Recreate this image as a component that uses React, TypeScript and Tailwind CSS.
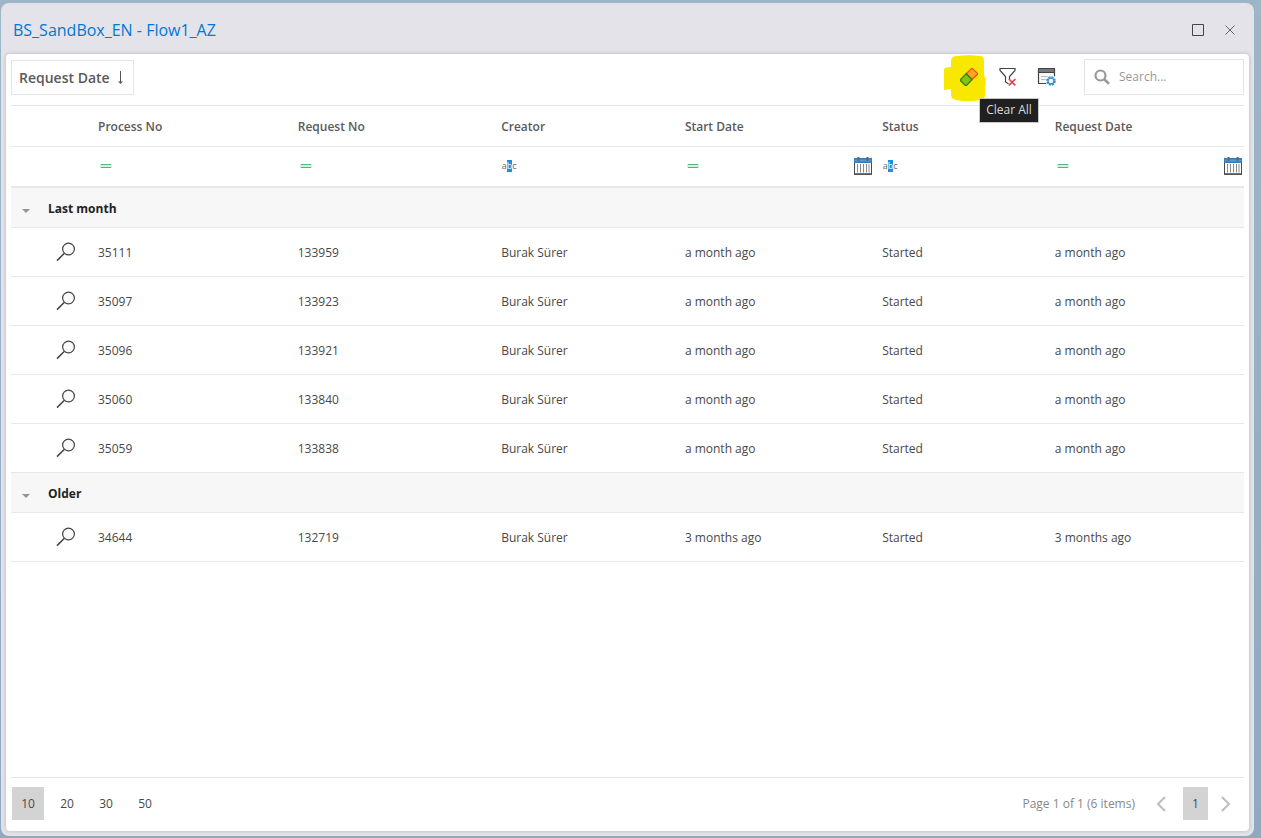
import { useState } from 'react';

interface ProcessRow {
  processNo: string;
  requestNo: string;
  creator: string;
  date: string;
  status: string;
}

interface RowGroup {
  label: string;
  rows: ProcessRow[];
}

type FilterKind = 'number' | 'text' | 'date';

const COLUMNS: { label: string; filter: FilterKind }[] = [
  { label: 'Process No', filter: 'number' },
  { label: 'Request No', filter: 'number' },
  { label: 'Creator', filter: 'text' },
  { label: 'Start Date', filter: 'date' },
  { label: 'Status', filter: 'text' },
  { label: 'Request Date', filter: 'date' },
];

const started = (processNo: string, requestNo: string, date: string): ProcessRow => ({
  processNo,
  requestNo,
  creator: 'Burak Sürer',
  date,
  status: 'Started',
});

const GROUPS: RowGroup[] = [
  {
    label: 'Last month',
    rows: [
      started('35111', '133959', 'a month ago'),
      started('35097', '133923', 'a month ago'),
      started('35096', '133921', 'a month ago'),
      started('35060', '133840', 'a month ago'),
      started('35059', '133838', 'a month ago'),
    ],
  },
  { label: 'Older', rows: [started('34644', '132719', '3 months ago')] },
];

const PAGE_SIZES = [10, 20, 30, 50];

function EraserIcon() {
  return (
    <svg width="20" height="20" viewBox="0 0 20 20" strokeWidth="1.3" strokeLinejoin="round">
      <path d="M7.2 6.8 12.4 1.600h1.200L18.400 6.400v1.200L13 12.600z" fill="#fba61c" stroke="#e8502a" />
      <path d="M7.200 6.800 1.600 12.400v1.400L6.200 18.400h1.400L13 12.600z" fill="#86c40c" stroke="#2d7d1e" />
    </svg>
  );
}

function ClearFilterIcon() {
  return (
    <svg width="20" height="20" viewBox="0 0 20 20" fill="none">
      <path d="M10.5 16.8 7.5 15V9.5L2 3.5v-2h15v2l-5.5 6v3" stroke="#444" strokeWidth="1.2" />
      <path d="m10.8 12 6.6 6.4m0-6.4-6.6 6.4" stroke="#e23b3b" strokeWidth="1.5" />
    </svg>
  );
}

function ColumnSettingsIcon() {
  return (
    <svg width="20" height="20" viewBox="0 0 20 20" fill="none">
      <path d="M9.5 16.5h-8v-15h16v8" fill="#f7f7f7" stroke="#444" strokeWidth="1.2" />
      <path d="M2 2h15v3H2z" fill="#777" />
      <path d="M1 5.5h17" stroke="#444" />
      <path d="M4 9.5h8M4 12.5h5" stroke="#bbb" />
      <circle cx="14" cy="14" r="5.5" fill="#fff" />
      <circle cx="14" cy="14" r="3.9" stroke="#2f8fd0" strokeWidth="1.8" strokeDasharray="2 1.06" />
      <circle cx="14" cy="14" r="2.9" stroke="#2f8fd0" strokeWidth="1.2" />
    </svg>
  );
}

function SearchIcon() {
  return (
    <svg width="16" height="16" viewBox="0 0 16 16" fill="none" stroke="#999" strokeWidth="2.2">
      <circle cx="6.5" cy="6.5" r="5" />
      <path d="m10.2 10.2 4.8 4.6" strokeWidth="2.6" />
    </svg>
  );
}

function MagnifierIcon() {
  return (
    <svg width="20" height="20" viewBox="0 0 20 20" fill="none" stroke="#444" strokeWidth="1.2">
      <circle cx="12.5" cy="7" r="5.9" fill="#fafafa" />
      <path d="M8.4 11.2 1 18.6" strokeWidth="1.5" />
    </svg>
  );
}

function CalendarIcon() {
  return (
    <svg width="18" height="18" viewBox="0 0 18 18">
      <path d="M.5 1.5h17v15.8H.5z" fill="#fff" stroke="#4a4a4a" />
      <path d="M0 1h18v5H0z" fill="#2a7cc7" />
      <path d="M1 2.5h16v2H1z" fill="#4b9fe0" />
      <path d="M4.5 0v4M13.5 0v4" stroke="#666" strokeWidth="2" />
      <path d="M3.5 7v8.5M6.5 7v8.5M9.5 7v8.5M12.5 7v8.5M15 7v8.5" stroke="#8a8a8a" />
      <path d="M0 17h18" stroke="#4a4a4a" strokeWidth="1.4" />
    </svg>
  );
}

function EqualsIcon() {
  return (
    <svg width="16" height="16" viewBox="0 0 16 16">
      <path d="M2 6h12v4H2z" fill="#d5f0df" />
      <path d="M3 6.5h10M3 9.5h10" stroke="#4fb878" />
    </svg>
  );
}

function ContainsIcon() {
  return (
    <span className="flex h-4 w-4 items-center justify-center text-[9px] leading-3 text-[#666]" aria-hidden="true">
      a<span className="bg-[#1e90d8] text-white">b</span>c
    </span>
  );
}

// marker stroke that sits under the Clear All button
function Highlight() {
  return (
    <svg className="pointer-events-none absolute -left-4 -top-3" width="44" height="48" viewBox="0 0 44 48">
      <path
        d="M8 5Q9 1 14 1l12-1 11 1q4 0 4 5v14q3 6 1 13v8q-1 4-5 4-12 3-24 0-5-1-5-5v-6l-7 1V14q1-2 7-2z"
        fill="#f8e800"
      />
    </svg>
  );
}

function FilterCell({ label, filter }: { label: string; filter: FilterKind }) {
  return (
    <td className="h-10 pl-2 pr-[2px]">
      <div className="flex items-center">
        <button type="button" aria-label={`${label} filter type`} className="shrink-0">
          {filter === 'text' ? <ContainsIcon /> : <EqualsIcon />}
        </button>
        <input aria-label={`Filter ${label}`} className="h-6 min-w-0 flex-1 bg-transparent px-2 outline-none" />
        {filter === 'date' && (
          <button type="button" aria-label={`Pick ${label}`} className="shrink-0">
            <CalendarIcon />
          </button>
        )}
      </div>
    </td>
  );
}

function GroupRows({ group }: { group: RowGroup }) {
  const [open, setOpen] = useState(true);

  return (
    <>
      <tr className="h-10 border-b border-[#e8e8e8] bg-[#f7f7f7]">
        <td className="pl-[10px] pt-2">
          <button type="button" aria-label={`Toggle ${group.label}`} onClick={() => setOpen(!open)} className="block">
            <svg width="10" height="6" viewBox="0 0 10 6">
              <path d="M1 1h8L5 5z" fill="#959595" />
            </svg>
          </button>
        </td>
        <td colSpan={7} className="pl-[7px] pt-[3px] font-bold text-[#222]">
          {group.label}
        </td>
      </tr>
      {open &&
        group.rows.map((row) => (
          <tr key={row.processNo} className="h-[49px] border-b border-[#e8e8e8]">
            <td />
            <td className="pl-[15px]">
              <button type="button" aria-label={`Open ${row.processNo}`} className="block">
                <MagnifierIcon />
              </button>
            </td>
            <td className="pl-2 pt-[2px]">{row.processNo}</td>
            <td className="pl-2 pt-[2px]">{row.requestNo}</td>
            <td className="pl-2 pt-[2px]">{row.creator}</td>
            <td className="pl-2 pt-[2px]">{row.date}</td>
            <td className="pl-2 pt-[2px]">{row.status}</td>
            <td className="pl-2 pt-[2px]">{row.date}</td>
          </tr>
        ))}
    </>
  );
}

function Toolbar() {
  return (
    <div className="flex h-[51px] items-center pb-1">
      <button
        type="button"
        className="flex h-[35px] items-center gap-[6px] border border-[#e5e5e5] px-[7px] pr-[9px] text-[14px] font-semibold text-[#5a5a5a]"
      >
        Request Date
        <svg width="8" height="14" viewBox="0 0 8 14" fill="none" stroke="#555">
          <path d="M4.5 0v12" />
          <path d="M2 10.5h5L4.500 13z" fill="#555" stroke="none" />
        </svg>
      </button>
      <div className="ml-auto flex items-center gap-[19px] pb-[2px]">
        <div className="relative">
          <Highlight />
          <button type="button" aria-describedby="clear-all-tip" aria-label="Clear All" className="relative block">
            <EraserIcon />
          </button>
          <div
            id="clear-all-tip"
            role="tooltip"
            className="absolute left-5 top-[31px] z-10 flex h-[25px] w-[60px] items-center justify-center whitespace-nowrap border border-[#c8c8c8] bg-[#202020] text-[12px] text-[#dcdcdc]"
          >
            Clear All
          </div>
        </div>
        <button type="button" aria-label="Clear filter">
          <ClearFilterIcon />
        </button>
        <button type="button" aria-label="Column settings">
          <ColumnSettingsIcon />
        </button>
      </div>
      <label className="mb-[2px] ml-[27px] flex h-9 w-40 items-center gap-[9px] border border-[#e5e5e5] pl-[9px] pr-2">
        <SearchIcon />
        <input
          type="search"
          aria-label="Search"
          placeholder="Search..."
          className="min-w-0 flex-1 bg-transparent text-[12px] outline-none placeholder:text-[#999]"
        />
      </label>
    </div>
  );
}

function Pager() {
  const [pageSize, setPageSize] = useState(10);

  return (
    <div className="flex h-[54px] items-center justify-between border-t border-[#e5e5e5] px-px pb-[2px]">
      <div className="flex gap-[7px]">
        {PAGE_SIZES.map((size) => (
          <button
            key={size}
            type="button"
            onClick={() => setPageSize(size)}
            className={`h-[33px] w-8 ${size === pageSize ? 'bg-[#d3d3d3]' : ''}`}
          >
            {size}
          </button>
        ))}
      </div>
      <div className="flex items-center pr-3">
        <span className="mr-[21px] text-[#888]">Page 1 of 1 (6 items)</span>
        <button type="button" aria-label="Previous page">
          <svg width="10" height="16" viewBox="0 0 10 16" fill="none" stroke="#bdbdbd" strokeWidth="2">
            <path d="M9 1 2 8l7 7" />
          </svg>
        </button>
        <button type="button" className="ml-[17px] mr-[13px] h-[33px] w-[25px] bg-[#d3d3d3] text-[#3a4a7a]">
          1
        </button>
        <button type="button" aria-label="Next page">
          <svg width="10" height="16" viewBox="0 0 10 16" fill="none" stroke="#bdbdbd" strokeWidth="2">
            <path d="m1 1 7 7-7 7" />
          </svg>
        </button>
      </div>
    </div>
  );
}

export default function App() {
  return (
    <div className="flex min-h-screen bg-linear-to-b from-[#9db5c6] to-[#8fa9bf] pb-[2px] pl-px pr-[7px] pt-[3px] font-['Open_Sans','Noto_Sans',sans-serif] text-[12px] text-[#484848]">
      <div className="flex flex-1 flex-col rounded-lg bg-[#e4e3e9] px-[5px] pb-[5px]">
        <header className="flex h-[51px] items-center justify-between pb-px pl-[7px] pr-[13px] pt-1">
          <h1 className="text-[16px] font-medium text-[#0078d4]">BS_SandBox_EN - Flow1_AZ</h1>
          <div className="flex items-center gap-5">
            <button type="button" aria-label="Maximize">
              <svg width="12" height="12" viewBox="0 0 12 12" fill="none" stroke="#444">
                <path d="M.5.5h11v11H.5z" />
              </svg>
            </button>
            <button type="button" aria-label="Close">
              <svg width="12" height="12" viewBox="0 0 12 12" stroke="#666">
                <path d="m1.500 1.500 9 9m0-9-9 9" />
              </svg>
            </button>
          </div>
        </header>
        <main className="flex flex-1 flex-col rounded-[4px] bg-white px-[5px] shadow-[0_0_4px_rgba(0,0,0,0.2)]">
          <Toolbar />
          <div className="flex-1 border-t border-[#e5e5e5]">
            <table className="w-full table-fixed border-collapse">
              <colgroup>
                <col className="w-[30px]" />
                <col className="w-[49px]" />
                <col className="w-[16.2%]" />
                <col className="w-[16.5%]" />
                <col className="w-[14.9%]" />
                <col className="w-[16%]" />
                <col className="w-[14%]" />
                <col />
              </colgroup>
              <thead>
                <tr className="h-10 border-b border-[#e8e8e8]">
                  <td />
                  <td />
                  {COLUMNS.map((column) => (
                    <th key={column.label} scope="col" className="pl-2 pt-[3px] text-left font-semibold text-[#5a5a5a]">
                      {column.label}
                    </th>
                  ))}
                </tr>
                <tr className="h-[41px] border-b-2 border-[#e8e8e8]">
                  <td />
                  <td />
                  {COLUMNS.map((column) => (
                    <FilterCell key={column.label} label={column.label} filter={column.filter} />
                  ))}
                </tr>
              </thead>
              <tbody>
                {GROUPS.map((group) => (
                  <GroupRows key={group.label} group={group} />
                ))}
              </tbody>
            </table>
          </div>
          <Pager />
        </main>
      </div>
    </div>
  );
}
